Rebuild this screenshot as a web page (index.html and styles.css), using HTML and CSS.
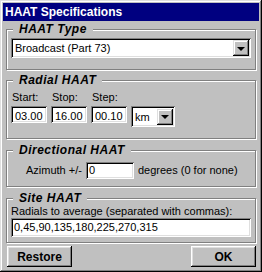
FILE: index.html
```html
<!DOCTYPE html>
<html lang="en">
<head>
  <meta charset="UTF-8">
  <title>HAAT Specifications</title>
  <link rel="stylesheet" href="styles.css">
</head>
<body>
  <div class="window">
    <div class="titlebar">HAAT Specifications</div>

    <div class="content">
      <fieldset class="group group-type">
        <legend>HAAT Type</legend>
        <div class="field combo combo-wide">
          <span class="value">Broadcast (Part 73)</span>
          <span class="drop"><span class="arrow"></span></span>
        </div>
      </fieldset>

      <fieldset class="group group-radial">
        <legend>Radial HAAT</legend>
        <div class="radial-row">
          <div class="col">
            <span class="label">Start:</span>
            <div class="field small">03.00</div>
          </div>
          <div class="col">
            <span class="label">Stop:</span>
            <div class="field small">16.00</div>
          </div>
          <div class="col">
            <span class="label">Step:</span>
            <div class="field small">00.10</div>
          </div>
          <div class="field combo combo-unit">
            <span class="value">km</span>
            <span class="drop"><span class="arrow"></span></span>
          </div>
        </div>
      </fieldset>

      <fieldset class="group group-dir">
        <legend>Directional HAAT</legend>
        <div class="dir-row">
          <span class="label">Azimuth +/-</span>
          <div class="field azimuth">0</div>
          <span class="label">degrees (0 for none)</span>
        </div>
      </fieldset>

      <fieldset class="group group-site">
        <legend>Site HAAT</legend>
        <span class="label">Radials to average (separated with commas):</span>
        <div class="field wide">0,45,90,135,180,225,270,315</div>
      </fieldset>
    </div>

    <div class="buttons">
      <button class="btn">Restore</button>
      <button class="btn">OK</button>
    </div>
  </div>
</body>
</html>
```

FILE: styles.css
```css
html, body {
  margin: 0;
  padding: 0;
  background: #c0c0c0;
}

body {
  font-family: "Liberation Sans", Arial, sans-serif;
  font-size: 11px;
  color: #000;
}

.window {
  width: 262px;
  height: 272px;
  box-sizing: border-box;
  padding: 3px;
  background: #c0c0c0;
  box-shadow: inset -1px -1px #000, inset 1px 1px #dfdfdf,
              inset -2px -2px #808080, inset 2px 2px #fff;
  display: flex;
  flex-direction: column;
}

.titlebar {
  height: 18px;
  line-height: 18px;
  background: #000080;
  color: #fff;
  font-weight: bold;
  font-size: 12px;
  padding-left: 2px;
}

.content {
  padding: 0 3px;
  display: flex;
  flex-direction: column;
}

.group {
  margin: 0;
  padding: 0 4px;
  border: 1px solid #808080;
  box-shadow: inset 1px 1px #fff, 1px 1px #fff;
  min-width: 0;
}

.group legend {
  font-weight: bold;
  font-style: italic;
  font-size: 12px;
  line-height: 13px;
  letter-spacing: 0.5px;
  padding: 0 6px;
  margin-left: 2px;
  background: #c0c0c0;
}

.group-type {
  margin-top: 2px;
  padding-top: 2px;
  padding-bottom: 11px;
}

.group-radial {
  margin-top: 4px;
  padding-top: 4px;
  padding-bottom: 11px;
}

.group-dir {
  margin-top: 5px;
  padding-top: 5px;
  padding-bottom: 7px;
}

.group-site {
  margin-top: 5px;
  padding-bottom: 5px;
}

.label {
  line-height: 13px;
  white-space: nowrap;
}

.field {
  background: #fff;
  box-sizing: border-box;
  box-shadow: inset 1px 1px #808080, inset -1px -1px #fff,
              inset 2px 2px #000, inset -2px -2px #dfdfdf;
  padding: 2px 3px 0 3px;
  line-height: 14px;
  white-space: nowrap;
}

.combo {
  display: flex;
  align-items: center;
  padding: 2px 2px 2px 4px;
}

.combo .value {
  flex: 1;
}

.combo-wide .value {
  margin-top: -1px;
}

.drop {
  width: 16px;
  height: 16px;
  box-sizing: border-box;
  background: #c0c0c0;
  box-shadow: inset -1px -1px #000, inset 1px 1px #dfdfdf,
              inset -2px -2px #808080, inset 2px 2px #fff;
  display: flex;
  align-items: center;
  justify-content: center;
}

.arrow {
  width: 0;
  height: 0;
  border-left: 4px solid transparent;
  border-right: 4px solid transparent;
  border-top: 4px solid #000;
  margin-top: 1px;
}

.combo-wide {
  height: 20px;
}

.radial-row {
  display: flex;
  align-items: flex-start;
  gap: 4px;
}

.col {
  display: flex;
  flex-direction: column;
  gap: 2px;
}

.col .label {
  padding-left: 1px;
}

.small {
  width: 36px;
  height: 17px;
  padding-top: 3px;
  padding-left: 4px;
}

.combo-unit {
  width: 44px;
  height: 21px;
  margin-top: 15px;
}

.dir-row {
  display: flex;
  align-items: center;
  gap: 4px;
  padding-left: 15px;
}

.azimuth {
  width: 48px;
  height: 17px;
  padding-top: 1px;
}

.group-site .label {
  display: block;
}

.wide {
  height: 19px;
  margin-top: 0;
}

.buttons {
  display: flex;
  justify-content: space-between;
  padding: 3px 3px 0 4px;
}

.btn {
  font-family: "Liberation Sans", Arial, sans-serif;
  font-weight: bold;
  font-size: 12px;
  width: 65px;
  height: 21px;
  padding: 0;
  border: none;
  background: #c0c0c0;
  color: #000;
  box-shadow: inset -1px -1px #000, inset 1px 1px #fff,
              inset -2px -2px #808080, inset 2px 2px #dfdfdf;
}
```
